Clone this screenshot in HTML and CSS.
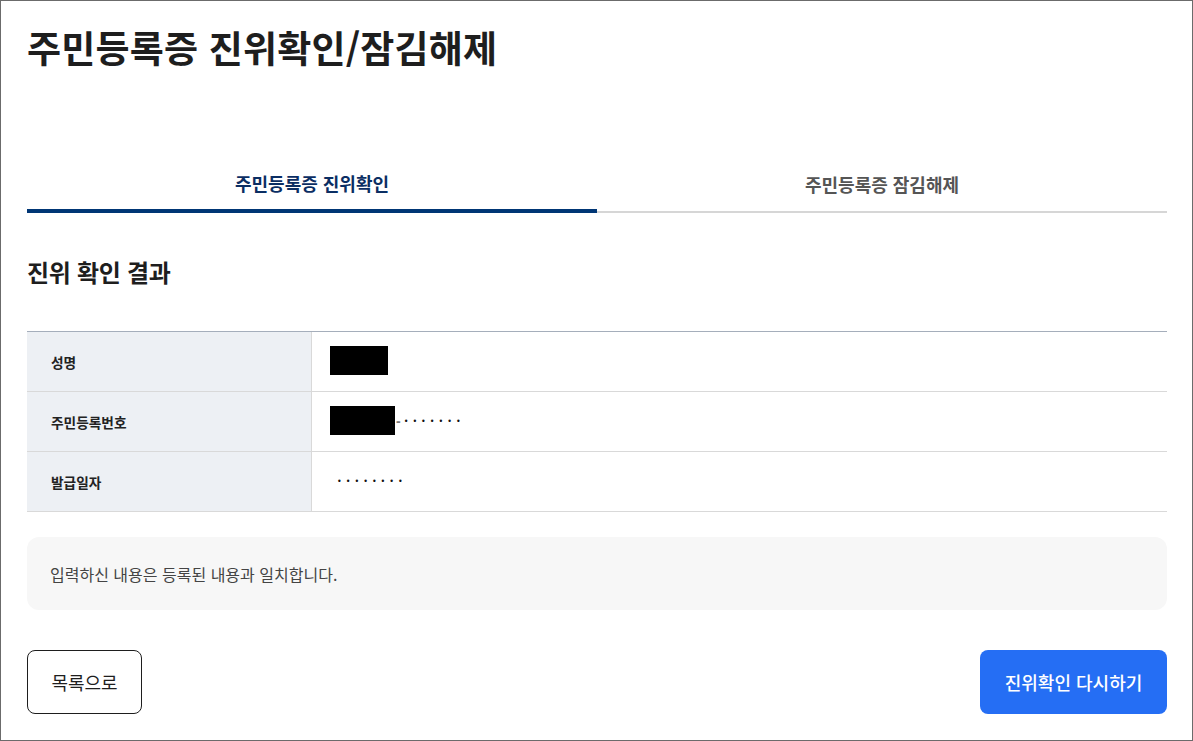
FILE: index.html
```html
<!DOCTYPE html>
<html lang="ko">
<head>
<meta charset="utf-8">
<title>주민등록증 진위확인/잠김해제</title>
<link rel="stylesheet" href="styles.css">
</head>
<body>
<div class="page">
  <h1 class="title">주민등록증 진위확인/잠김해제</h1>

  <div class="tabs">
    <div class="tab tab-active">주민등록증 진위확인</div>
    <div class="tab">주민등록증 잠김해제</div>
  </div>

  <h2 class="section-title">진위 확인 결과</h2>

  <div class="result-table">
    <div class="row">
      <div class="label">성명</div>
      <div class="value"><span class="mask mask-name"></span></div>
    </div>
    <div class="row">
      <div class="label">주민등록번호</div>
      <div class="value"><span class="mask mask-id"></span><span class="dash">-</span><span class="dots">•••••••</span></div>
    </div>
    <div class="row">
      <div class="label">발급일자</div>
      <div class="value"><span class="dots dots-date">••••••••</span></div>
    </div>
  </div>

  <div class="notice">입력하신 내용은 등록된 내용과 일치합니다.</div>

  <div class="actions">
    <button class="btn btn-outline">목록으로</button>
    <button class="btn btn-primary">진위확인 다시하기</button>
  </div>
</div>
</body>
</html>
```

FILE: styles.css
```css
* {
  box-sizing: border-box;
}

html, body {
  margin: 0;
  padding: 0;
  background: #ffffff;
}

body {
  font-family: "Noto Sans CJK KR", "Noto Sans", sans-serif;
  color: #1e1e1e;
}

.page {
  width: 1193px;
  height: 741px;
  border: 1px solid #6b6b6b;
  padding: 0 25px 0 26px;
  overflow: hidden;
}

.title {
  margin: 22px 0 0;
  font-size: 37px;
  line-height: 48px;
  font-weight: 700;
  letter-spacing: 0.2px;
  color: #1e1e1e;
}

.tabs {
  display: flex;
  align-items: flex-end;
  margin-top: 86px;
}

.tab {
  flex: 1 1 0;
  height: 56px;
  display: flex;
  align-items: center;
  justify-content: center;
  font-size: 18px;
  font-weight: 700;
  letter-spacing: 0;
  color: #555555;
  border-bottom: 2px solid #d6d6d6;
}

.tab-active {
  color: #0b2e63;
  border-bottom: 4px solid #003675;
}

.section-title {
  margin: 44px 0 0;
  font-size: 24px;
  line-height: 30px;
  font-weight: 700;
  letter-spacing: -0.3px;
  color: #1e1e1e;
}

.result-table {
  margin-top: 44px;
  border-top: 1px solid #a5aebb;
}

.row {
  display: flex;
  height: 60px;
  border-bottom: 1px solid #d9d9d9;
}

.label {
  width: 285px;
  flex: none;
  background: #edf0f4;
  border-right: 1px solid #d9d9d9;
  padding-left: 24px;
  display: flex;
  align-items: center;
  font-size: 13.7px;
  font-weight: 700;
  color: #222222;
}

.value {
  flex: 1;
  display: flex;
  align-items: center;
  padding-left: 18px;
  font-size: 15px;
  color: #1e1e1e;
}

.mask {
  display: inline-block;
  height: 29px;
  background: #000000;
}

.mask-name {
  width: 58px;
  margin-top: -2px;
}

.mask-id {
  width: 65px;
  margin-top: -2px;
}

.dash {
  font-family: "Liberation Sans", sans-serif;
  font-weight: 700;
  color: #7a7a7a;
  font-size: 14px;
  margin-left: 1px;
  margin-right: 3px;
  position: relative;
  top: -1px;
}

.dots {
  font-family: "DejaVu Sans", sans-serif;
  font-size: 8px;
  letter-spacing: 4px;
  color: #111111;
}

.dots-date {
  margin-left: 7px;
}

.notice {
  margin-top: 25px;
  height: 73px;
  background: #f7f7f7;
  border-radius: 12px;
  padding-left: 23px;
  display: flex;
  align-items: center;
  font-size: 16px;
  letter-spacing: 0;
  color: #444444;
}

.actions {
  margin-top: 40px;
  display: flex;
  justify-content: space-between;
}

.btn {
  height: 64px;
  border-radius: 8px;
  font-family: "Noto Sans CJK KR", "Noto Sans", sans-serif;
  font-size: 18px;
  letter-spacing: 0;
  cursor: pointer;
}

.btn-outline {
  width: 115px;
  background: #ffffff;
  border: 1px solid #1e1e1e;
  color: #1e1e1e;
}

.btn-primary {
  width: 187px;
  background: #256ef4;
  border: none;
  color: #ffffff;
  font-weight: 500;
}
```
